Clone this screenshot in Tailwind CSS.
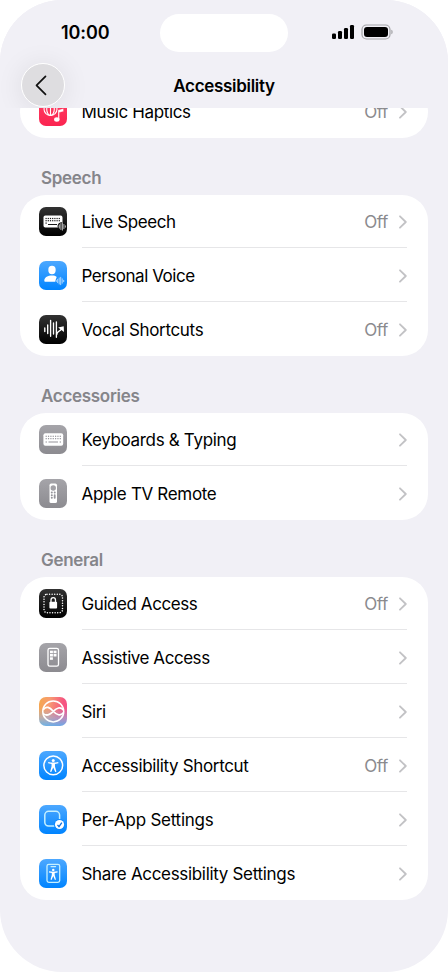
<!DOCTYPE html>
<html lang="en">
<head>
<meta charset="utf-8">
<title>Accessibility</title>
<script src="https://cdn.jsdelivr.net/npm/@tailwindcss/browser@4"></script>
</head>
<body class="bg-white font-['Inter','Liberation_Sans',sans-serif] text-black">
<div class="relative h-[972px] w-[448px] overflow-hidden rounded-[62px] bg-[#f1f0f6]">
  <header class="relative z-10 h-[108px] overflow-hidden bg-[#f1f0f6]">
    <div class="flex h-[63px] items-center">
      <div class="w-[160px] pt-[3px] pl-[61px] text-[18px] leading-[20px] font-semibold tracking-[-0.1px]">10:00</div>
      <div class="mt-[3px] h-[38px] w-[128px] rounded-full bg-white"></div>
      <svg class="mt-[1px] ml-[43px]" width="64" height="18" viewBox="0 0 64 18">
        <rect x="1" y="10.500" width="4" height="5.500" rx="1.200"/><rect x="7" y="8" width="4" height="8" rx="1.200"/><rect x="13" y="5" width="4" height="11" rx="1.200"/><rect x="19" y="2" width="4" height="14" rx="1.200"/>
        <rect x="31" y="2" width="28" height="14" rx="4.500" fill="none" stroke="#a3a3a7" stroke-width="1.200"/>
        <rect x="33" y="4" width="24" height="10" rx="3"/>
        <path d="M60.300 6.700c1.800.5 1.800 4.100 0 4.600z" fill="#a3a3a7"/>
      </svg>
    </div>
    <div class="flex h-[45px] items-start pl-[21px]">
      <button class="grid size-[44px] shrink-0 place-items-center rounded-full border border-white bg-[#dedde0] shadow-[0_2px_28px_rgba(0,0,0,0.09)]">
        <svg class="mr-[4px]" width="14" height="22" viewBox="0 0 14 22" fill="none" stroke="#111" stroke-width="1.700" stroke-linecap="round" stroke-linejoin="round"><path d="M11.500 2.300 2.500 11.300l9 9"/></svg>
      </button>
      <h1 class="flex-1 pt-[12px] pr-[65px] text-center text-[17px] leading-[22px] font-semibold tracking-[-0.3px]"><span>Accessibility</span></h1>
    </div>
  </header>
  <main id="list" class="-mt-[23px] px-[20px]"></main>
</div>
<script>
const wave = (x, y, c) => `<g transform="translate(${x} ${y})" stroke="${c}" stroke-width=".85" stroke-linecap="round"><path d="M0-.6v1.2M1.500-1.700v3.400M3-3v6M4.500-3.700v7.400M6-2.200v4.400M7.500-.7v1.400"/></g>`;
const dots = (x, y, nx, ny, s, d, c) => { let r = ''; for (let i = 0; i < nx; i++) for (let j = 0; j < ny; j++) r += `<rect x="${x + i * s}" y="${y + j * s}" width="${d}" height="${d}" fill="${c}"/>`; return r; };
const man = (k) => `<g transform="translate(14.250 14.400) scale(${k})" fill="#fff"><circle cy="-5" r="1.500"/><path d="M-5-3.400Q0-2.300 5-3.400L5.100-2.100 1.700-1.400V1L3.200 6.300 2 6.700 0 2-2 6.700-3.200 6.300-1.700 1V-1.400L-5.100-2.100z"/></g>`;
const icons = {
  haptics: ['#ff4164', '#fb2450', `<g fill="none" stroke="#fff" stroke-width="1.100"><circle cx="11.500" cy="12" r="6.500"/><ellipse cx="11.500" cy="12" rx="3.800" ry="6.500"/><path d="M11.500 5.500v13"/></g><path d="M19 22.500V13l5.500-1.600v3L20.400 15.500v7.300" fill="#fff" stroke="#fb2d56" stroke-width=".3"/><ellipse cx="17.800" cy="22.500" rx="2.700" ry="2.200" fill="#fff"/>`],
  live: ['#323232', '#000', `<rect x="4.500" y="8.600" width="19" height="12" rx="1.800" fill="#fff"/>${dots(6.5, 10.9, 7, 2, 2.2, 1.2, '#181818')}${dots(6.5, 15.5, 1, 1, 2, 1.2, '#181818')}<path d="M9 17.500h9" stroke="#181818" stroke-width="1.200"/><circle cx="22.700" cy="19.500" r="4.300" fill="#080808"/>${wave(18.9, 19.5, '#d8d8d8')}`],
  voice: ['#4da8ff', '#0084ff', `<ellipse cx="13" cy="9" rx="3.700" ry="4.200" fill="#fff"/><path d="M5.300 20c0-3.700 3.700-5.400 7.700-5.400 2.200 0 3.500.5 4.700 1.300L16 20.800H6.200q-.9 0-.9-.8z" fill="#fff"/>${wave(17.2, 20, '#c8e5ff')}`],
  vocal: ['#323232', '#000', `<g fill="none" stroke="#fff" stroke-width="1.350" stroke-linecap="round"><path d="M5.800 13v3.500M8.700 10v8.500M11.600 5.300v16M14.500 8v11M17.400 6.800v15.500M17.800 19.500c0-4 3.400-2.700 4.800-5.800"/></g><path d="m19.200 12.600 5.500-1.300.3 5.600z" fill="#fff"/>`],
  keyboard: ['#a5a4a9', '#8c8b90', `<rect x="4.400" y="8.300" width="19.800" height="12.500" rx="2" fill="#fff"/>${dots(6.6, 10.7, 7, 2, 2.35, 1.2, '#95949a')}${dots(6.6, 16.4, 1, 1, 2, 1.2, '#95949a')}${dots(20.7, 16.4, 1, 1, 2, 1.2, '#95949a')}<path d="M9.500 17h9.500" stroke="#95949a" stroke-width="1.200"/>`],
  remote: ['#a5a4a9', '#8c8b90', `<rect x="10.500" y="4.600" width="7.500" height="19.400" rx="1.600" fill="#fff"/><circle cx="14.250" cy="9" r="2.700" fill="#a2a1a6"/><g fill="#95949a"><circle cx="12.800" cy="13.600" r="1"/><circle cx="15.700" cy="13.600" r="1"/><circle cx="12.800" cy="16.200" r="1"/><rect x="14.800" y="15.300" width="1.800" height="4.400" rx=".8"/><circle cx="12.800" cy="18.800" r="1"/></g>`],
  guided: ['#323232', '#000', `<rect x="5" y="5.200" width="18.500" height="18.500" rx="3" fill="none" stroke="#fff" stroke-width="1.500" stroke-linecap="round" stroke-dasharray=".01 2.560"/><rect x="10.400" y="12.800" width="7.700" height="6.700" rx="1" fill="#fff"/><path d="M12 13v-1.900c0-3.200 4.500-3.200 4.500 0V13" fill="none" stroke="#fff" stroke-width="1.300"/>`],
  assistive: ['#a5a4a9', '#8c8b90', `<rect x="9" y="5.300" width="10.500" height="17.900" rx="1.800" fill="none" stroke="#fff" stroke-width="1.300"/><g fill="#fff"><rect x="11" y="7.700" width="2.900" height="2.500"/><rect x="14.600" y="7.700" width="2.900" height="2.500"/><rect x="11" y="11" width="2.900" height="2.500"/><rect x="14.600" y="11" width="2.900" height="2.500"/><rect x="11" y="14.300" width="2.900" height="2.500"/></g>`],
  siri: ['', '', `<g fill="none" stroke="#fff"><circle cx="14.250" cy="14.400" r="10.500" stroke-width="1.500"/><path d="M4.200 12.800C7 8.200 11 10.600 14.250 14.200S21.500 19.500 24.400 15.800M4.200 16.500C7.500 19.800 11 17.500 14.250 14.400S21.500 9 24.400 13" stroke-width="1.700"/></g>`],
  access: ['#4da8ff', '#0084ff', `<circle cx="14.250" cy="14.400" r="9.400" fill="none" stroke="#fff" stroke-width="1.500"/>${man(1)}`],
  perapp: ['#4da8ff', '#0084ff', `<rect x="5.800" y="6.300" width="14.800" height="14.800" rx="3.800" fill="none" stroke="#c5f0ff" stroke-width="1.500"/><circle cx="20.500" cy="19.500" r="5.500" fill="#0c88ff"/><circle cx="20.500" cy="19.500" r="4.600" fill="#fff"/><path d="m18.500 19.800 1.500 1.800 2.800-4" fill="none" stroke="#0d6fe0" stroke-width="1.300"/>`],
  share: ['#4da8ff', '#0084ff', `<rect x="8" y="5.300" width="12.700" height="18" rx="1.800" fill="none" stroke="#c5f0ff" stroke-width="1.300"/><path d="M12 7.600h4.600" stroke="#c5f0ff" stroke-width="1.100" stroke-linecap="round"/><g transform="translate(0 .8)">${man(.85)}</g>`]
};
const siriBg = 'linear-gradient(0deg,#5ab4f5e0 0%,#8db9e990 28%,transparent 62%),linear-gradient(100deg,#f5a84b 0%,#f79a72 35%,#f5567f 75%,#f84d8c 100%)';
const sections = [
  ['', [['haptics', 'Music Haptics', 'Off', -.37]]],
  ['Speech', [['live', 'Live Speech', 'Off', -.4], ['voice', 'Personal Voice', '', -.45], ['vocal', 'Vocal Shortcuts', 'Off', -.33]]],
  ['Accessories', [['keyboard', 'Keyboards & Typing', '', -.33], ['remote', 'Apple TV Remote', '', -.33]]],
  ['General', [['guided', 'Guided Access', 'Off', -.43], ['assistive', 'Assistive Access', '', -.45], ['siri', 'Siri', '', -.4], ['access', 'Accessibility Shortcut', 'Off', -.35], ['perapp', 'Per-App Settings', '', -.26], ['share', 'Share Accessibility Settings', '', -.32]]]
];
const row = ([icon, label, value, spacing], i, all) => {
  const [a, b, art] = icons[icon];
  const bg = icon === 'siri' ? siriBg : `linear-gradient(${a},${b})`;
  return `<li class="flex pl-[18.500px] ${i ? 'h-[54px] pt-[13px]' : 'h-[53px] pt-[12px]'}">
    <span class="size-[28.500px] shrink-0 overflow-hidden rounded-[7px]" style="background:${bg}"><svg viewBox="0 0 28.500 28.500" class="block size-full">${art}</svg></span>
    <div class="mr-[21px] ml-[14.500px] flex flex-1 items-start border-b pt-[4px] ${i < all.length - 1 ? 'border-[#e6e6e8]' : 'border-transparent'}">
      <span class="flex-1 text-[17px] leading-[22px]" style="letter-spacing:${spacing}px">${label.replace('&', '&amp;')}</span>
      <span class="mr-[11px] text-[17px] leading-[22px] tracking-[-0.35px] text-[#8a8a8e]">${value}</span>
      <svg class="mt-[4px] shrink-0" width="8" height="14" viewBox="0 0 8 14" fill="none" stroke="#c2c2c5" stroke-width="1.800" stroke-linecap="round" stroke-linejoin="round"><path d="M1 1.300 6.800 7 1 12.700"/></svg>
    </div></li>`;
};
document.getElementById('list').innerHTML = sections.map(([title, rows]) =>
  `${title ? `<h2 class="flex h-[57px] items-end pb-[6px] pl-[21px] text-[17px] leading-[22px] font-semibold tracking-[-0.3px] text-[#85858a]">${title}</h2>` : ''}<ul class="rounded-[26px] bg-white">${rows.map(row).join('')}</ul>`).join('');
</script>
</body>
</html>
